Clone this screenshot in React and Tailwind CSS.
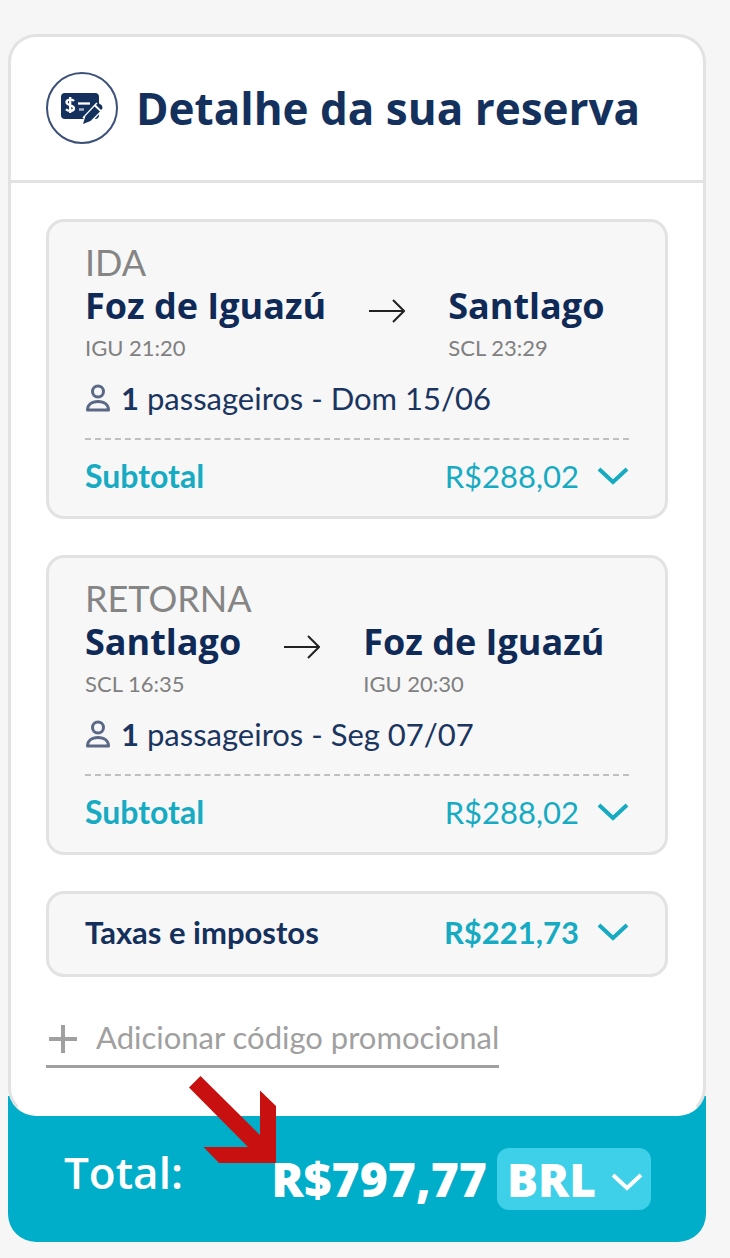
import React, { useState } from 'react';

const flights = [
  {
    id: 'ida',
    label: 'IDA',
    from: { city: 'Foz de Iguazú', time: 'IGU 21:20' },
    to: { city: 'Santlago', time: 'SCL 23:29' },
    date: 'Dom 15/06',
    subtotal: 'R$288,02',
  },
  {
    id: 'retorna',
    label: 'RETORNA',
    from: { city: 'Santlago', time: 'SCL 16:35' },
    to: { city: 'Foz de Iguazú', time: 'IGU 20:30' },
    date: 'Seg 07/07',
    subtotal: 'R$288,02',
  },
];

const ChevronIcon = ({ className }) => (
  <svg viewBox="0 0 32 20" className={className} fill="none" stroke="currentColor" strokeWidth="4" aria-hidden="true">
    <path d="M2 3l14 13L30 3" />
  </svg>
);

const ArrowIcon = () => (
  <svg viewBox="0 0 36 24" className="mt-[15px] h-6 w-9 shrink-0 text-[#222]" fill="none" stroke="currentColor" strokeWidth="2" aria-hidden="true">
    <path d="M0 12h34M24 1l11 11-11 11" />
  </svg>
);

const UserIcon = () => (
  <svg viewBox="0 0 26 28" className="h-7 w-[26px] shrink-0 text-[#5a6885]" fill="none" stroke="currentColor" strokeWidth="3" aria-hidden="true">
    <circle cx="13" cy="7.5" r="5.5" />
    <path d="M2.500 26c0-5 4-8.500 10.500-8.500s10.500 3.500 10.500 8.500z" strokeLinejoin="round" />
  </svg>
);

const BookingIcon = () => (
  <svg viewBox="0 0 42 32" className="h-8 w-[42px]" aria-hidden="true">
    <rect x="0" y="1" width="38" height="26" rx="4" fill="#14305c" />
    <path d="M13 9c-1.500-2-7.500-2-7.500 1.300C5.500 14 13 12.500 13 16.300c0 3.400-6 3.200-8 1M9.200 5v16" fill="none" stroke="#fff" strokeWidth="2.300" />
    <path d="M17 11.500h12" stroke="#fff" strokeWidth="2.300" />
    <path d="M18 17.500h5" stroke="#a9b4c6" strokeWidth="2.500" />
    <path d="M25 29L39 14" stroke="#fff" strokeWidth="10" />
    <path d="M22 32l2.500-8 9-9.500 5.500 5-9.500 9.500z" fill="#14305c" />
    <path d="M35 13l1-1c2-1.700 7 2 5 5l-1 1z" fill="#14305c" />
  </svg>
);

const Stop = ({ city, time }) => (
  <div>
    <p className="font-['Open_Sans',sans-serif] text-4xl leading-[44px] font-bold text-[#0f2a57]">{city}</p>
    <p className="text-[22px] leading-10 text-[#808080]">{time}</p>
  </div>
);

const FlightCard = ({ flight, open, onToggle }) => (
  <section className="rounded-[18px] border-3 border-[#e2e2e2] bg-[#f7f7f7] px-9 pt-[18px] pb-4">
    <h2 className="text-4xl leading-[44px] text-[#858585]">{flight.label}</h2>
    <div className="flex items-start gap-[43px]">
      <Stop {...flight.from} />
      <ArrowIcon />
      <Stop {...flight.to} />
    </div>
    <p className="mt-1.5 flex items-center gap-2.5 text-[31px] leading-[48px] text-[#1a3560]">
      <UserIcon />
      <span>
        <b>{1}</b> passageiros - {flight.date}
      </span>
    </p>
    <button
      type="button"
      aria-expanded={open}
      onClick={onToggle}
      className="mt-4 flex w-full items-center border-t-2 border-dashed border-[#bfbfbf] pt-3 text-[31px] leading-[48px] text-[#16abc2]"
    >
      <span className="text-[32px] font-bold">Subtotal</span>
      <span className="ml-auto">{flight.subtotal}</span>
      <ChevronIcon className="ml-[18px] h-5 w-8" />
    </button>
  </section>
);

const App = () => {
  const [openId, setOpenId] = useState(null);
  const [currency, setCurrency] = useState('BRL');

  const toggle = (id) => setOpenId(openId === id ? null : id);

  return (
    <div className="min-h-screen bg-[#f6f6f6] pt-[34px] pr-6 pb-4 pl-2 font-['Lato',sans-serif]">
      <main className="relative z-10 rounded-[28px] border-3 border-[#e2e2e2] border-b-white bg-white">
        <header className="flex items-center gap-[18px] border-b-3 border-[#e2e2e2] px-[35px] pt-[35px] pb-9">
          <span className="flex h-[72px] w-[72px] shrink-0 items-center justify-center rounded-full border-2 border-[#3c5078]">
            <BookingIcon />
          </span>
          <h1 className="font-['Open_Sans',sans-serif] text-[44px] leading-[56px] font-bold text-[#14305c]">Detalhe da sua reserva</h1>
        </header>

        <div className="flex flex-col gap-9 px-[35px] pt-9 pb-[45px]">
          {flights.map((flight) => (
            <FlightCard key={flight.id} flight={flight} open={openId === flight.id} onToggle={() => toggle(flight.id)} />
          ))}

          <button
            type="button"
            aria-expanded={openId === 'taxas'}
            onClick={() => toggle('taxas')}
            className="flex items-center rounded-[18px] border-3 border-[#e2e2e2] bg-[#f7f7f7] px-9 pt-3.5 pb-[18px] text-[31px] leading-[48px] font-bold text-[#16abc2]"
          >
            <span className="text-[#14305c]">Taxas e impostos</span>
            <span className="ml-auto">R$221,73</span>
            <ChevronIcon className="ml-[18px] h-5 w-8" />
          </button>

          <button
            type="button"
            className="flex items-center gap-[18px] self-start border-b-3 border-[#a0a0a0] pb-1 text-[31px] leading-[48px] text-[#a0a0a0]"
          >
            <svg viewBox="0 0 32 32" className="h-8 w-8" fill="none" stroke="currentColor" strokeWidth="4" aria-hidden="true">
              <path d="M3 18h28M17 4v28" />
            </svg>
            Adicionar código promocional
          </button>
        </div>
      </main>

      <footer className="-mt-5 flex items-start rounded-b-[28px] bg-[#00aeca] pt-[52px] pr-[55px] pb-8 pl-14 font-['Open_Sans',sans-serif] text-white">
        <span className="text-[44px] leading-[48px] font-semibold">Total:</span>
        <div className="ml-auto flex items-center gap-2.5 text-[46px] leading-[62px] font-extrabold">
          <div className="relative z-20 text-5xl leading-[62px]">
            R$797,77
            <svg viewBox="0 0 87 87" className="absolute -top-[72px] -left-[82px] h-[87px] w-[87px]" fill="#c81010" aria-hidden="true">
              <path d="M11.500 0L71 59V14.500L87 30v57H30L14.500 71H59L0 11.500z" />
            </svg>
          </div>
          <label className="relative flex items-center">
            <select
              aria-label="Moeda"
              value={currency}
              onChange={(e) => setCurrency(e.target.value)}
              className="h-[62px] w-[154px] appearance-none rounded-xl bg-[#3dd0e8] pl-2.5"
            >
              <option>BRL</option>
              <option>USD</option>
            </select>
            <ChevronIcon className="pointer-events-none absolute top-6 right-2 h-5 w-8" />
          </label>
        </div>
      </footer>
    </div>
  );
};

export default App;
